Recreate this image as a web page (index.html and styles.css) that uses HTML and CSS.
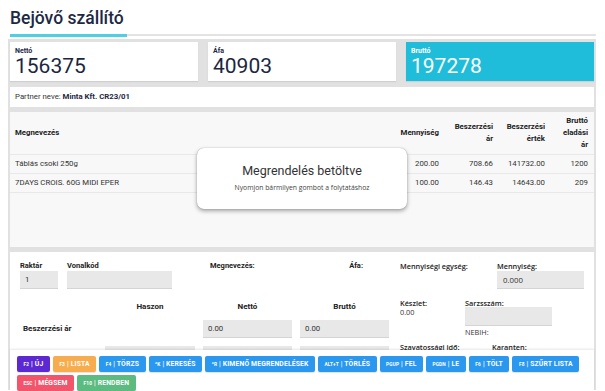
FILE: index.html
```html
<!DOCTYPE html>
<html lang="hu">
<head>
<meta charset="utf-8">
<title>Bejövő szállító</title>
<link rel="stylesheet" href="styles.css">
</head>
<body>
<div class="page">
  <header class="head">
    <h1 class="title">Bejövő szállító</h1>
    <div class="tabline"><span class="tabline-active"></span></div>
  </header>

  <main class="shell">
    <section class="totals">
      <div class="total"><div class="total-label">Nettó</div><div class="total-value">156375</div></div>
      <div class="total"><div class="total-label">Áfa</div><div class="total-value">40903</div></div>
      <div class="total total-accent"><div class="total-label">Bruttó</div><div class="total-value">197278</div></div>
    </section>

    <section class="partner">Partner neve: <b>Minta Kft. CR23/01</b></section>

    <section class="items">
      <table class="items-table">
        <colgroup>
          <col><col class="w-qty"><col class="w-price"><col class="w-value"><col class="w-gross">
        </colgroup>
        <thead>
          <tr>
            <th class="c-name">Megnevezés</th>
            <th>Mennyiség</th>
            <th>Beszerzési<br>ár</th>
            <th>Beszerzési<br>érték</th>
            <th>Bruttó<br>eladási<br>ár</th>
          </tr>
        </thead>
        <tbody>
          <tr><td class="c-name">Táblás csoki 250g</td><td>200.00</td><td>708.66</td><td>141732.00</td><td>1200</td></tr>
          <tr><td class="c-name">7DAYS CROIS. 60G MIDI EPER</td><td>100.00</td><td>146.43</td><td>14643.00</td><td>209</td></tr>
        </tbody>
      </table>
    </section>

    <section class="form">
      <div class="row-top">
        <div class="field f-raktar"><div class="lbl">Raktár</div><div class="inp">1</div></div>
        <div class="field f-vonal"><div class="lbl">Vonalkód</div><div class="inp"></div></div>
        <div class="field f-megn"><div class="lbl">Megnevezés:</div></div>
        <div class="field f-afa"><div class="lbl">Áfa:</div></div>
        <div class="field f-me"><div class="lbl lbl-os">Mennyiségi egység:</div></div>
        <div class="field f-menny"><div class="lbl lbl-os">Mennyiség:</div><div class="inp inp-os">0.000</div></div>
      </div>

      <div class="row-bottom">
        <div class="prices">
          <div></div>
          <div class="ph">Haszon</div>
          <div class="ph">Nettó</div>
          <div class="ph">Bruttó</div>

          <div class="pl">Beszerzési ár</div>
          <div></div>
          <div class="inp">0.00</div>
          <div class="inp">0.00</div>

          <div class="pl">Eladási ár</div>
          <div class="inp">0.00</div>
          <div class="inp">0.00</div>
          <div class="inp">0.00</div>
        </div>

        <div class="stock">
          <div class="stock-row">
            <div class="s-keszlet"><div class="slbl">Készlet:</div><div class="sval">0.00</div></div>
            <div class="s-sarzs"><div class="slbl">Sarzsszám:</div><div class="inp s-inp"></div><div class="sval s-nebih">NEBIH:</div></div>
          </div>
          <div class="stock-row stock-row2">
            <div class="s-wide"><div class="slbl">Szavatossági idő:</div></div>
            <div class="s-wide"><div class="slbl">Karanten:</div></div>
          </div>
        </div>
      </div>
    </section>
  </main>

  <footer class="actions">
    <div class="btn-row">
      <button class="btn btn-purple"><span class="key">F2</span>| ÚJ</button>
      <button class="btn btn-orange"><span class="key">F3</span>| LISTA</button>
      <button class="btn btn-blue"><span class="key">F4</span>| TÖRZS</button>
      <button class="btn btn-blue"><span class="key">^K</span>| KERESÉS</button>
      <button class="btn btn-blue"><span class="key">^R</span>| KIMENŐ MEGRENDELÉSEK</button>
      <button class="btn btn-blue"><span class="key">ALT+T</span>| TÖRLÉS</button>
      <button class="btn btn-blue"><span class="key">PGUP</span>| FEL</button>
      <button class="btn btn-blue"><span class="key">PGDN</span>| LE</button>
      <button class="btn btn-blue"><span class="key">F6</span>| TÖLT</button>
      <button class="btn btn-blue"><span class="key">F8</span>| SZŰRT LISTA</button>
    </div>
    <div class="btn-row">
      <button class="btn btn-red"><span class="key">ESC</span>| MÉGSEM</button>
      <button class="btn btn-green"><span class="key">F10</span>| RENDBEN</button>
    </div>
  </footer>

  <div class="modal">
    <div class="modal-title">Megrendelés betöltve</div>
    <div class="modal-text">Nyomjon bármilyen gombot a folytatáshoz</div>
  </div>
</div>
</body>
</html>
```
FILE: styles.css
```css
* { box-sizing: border-box; }
html, body { margin: 0; padding: 0; }
body {
  font-family: Roboto, "Noto Sans", sans-serif;
  color: #333;
  background: #fff;
}
.page {
  position: relative;
  width: 605px;
  height: 391px;
  overflow: hidden;
}

/* header */
.head { padding: 8px 9px 0 10px; }
.title {
  margin: 0;
  font-size: 17.5px;
  line-height: 20px;
  font-weight: 500;
  color: #1d2944;
}
.tabline {
  margin-top: 7px;
  height: 2px;
  background: #e3e3e3;
}
.tabline-active {
  display: block;
  width: 117px;
  height: 3px;
  margin-top: -1px;
  background: #4fcfe4;
}

/* gray shell */
.shell {
  margin: 3px 9px 0 8px;
  height: 351px;
  background: #e1e1e1;
  padding: 3px 2px 0;
}

.totals {
  display: grid;
  grid-template-columns: repeat(3, 1fr);
  gap: 10px;
}
.total {
  height: 39px;
  background: #fff;
  padding: 5px 5px 0;
  box-shadow: 0 1px 1px rgba(0,0,0,.08);
}
.total-label {
  font-size: 7px;
  line-height: 8px;
  font-weight: 700;
  color: #1d2944;
}
.total-value {
  font-size: 21px;
  line-height: 22px;
  color: #1b2640;
}
.total-accent { background: #1fbdd9; }
.total-accent .total-label,
.total-accent .total-value { color: #fff; }

.partner {
  margin-top: 6px;
  height: 20px;
  background: #fff;
  padding: 0 5px;
  font-size: 7.8px;
  line-height: 20px;
  color: #333;
}
.partner b { color: #1d2944; font-weight: 700; }

/* items table */
.items {
  margin-top: 5px;
  height: 135px;
  background: #f8f8f8;
}
.items-table {
  width: 100%;
  border-collapse: collapse;
  table-layout: fixed;
  font-size: 7.8px;
}
.w-qty { width: 55px; }
.w-price { width: 54px; }
.w-value { width: 52px; }
.w-gross { width: 43px; }
.items-table th {
  height: 42px;
  padding: 0 6px;
  text-align: right;
  vertical-align: middle;
  font-weight: 700;
  line-height: 12px;
  color: #222;
}
.items-table td {
  height: 19px;
  padding: 0 6px;
  text-align: right;
  border-top: 1px solid #e8e8e8;
  color: #333;
}
.items-table tbody tr:last-child td { border-bottom: 1px solid #e8e8e8; }
.items-table .c-name { text-align: left; padding-left: 5px; }

/* form */
.form {
  margin-top: 5px;
  height: 200px;
  background: #fff;
  padding: 9px 10px 0;
}
.row-top { display: flex; align-items: flex-start; }
.lbl {
  font-size: 7.5px;
  line-height: 10px;
  font-weight: 700;
  color: #222;
}
.lbl-os { font-family: "Open Sans", sans-serif; font-weight: 600; font-size: 7.3px; }
.inp {
  height: 18px;
  background: #e8e8e8;
  border-bottom: 1px solid #d4d4d4;
  padding: 0 5px;
  font-size: 7.8px;
  line-height: 18px;
  color: #333;
}
.inp-os { font-family: "Open Sans", sans-serif; padding-left: 6px; }
.f-raktar { width: 38px; margin-right: 9px; }
.f-vonal { width: 105px; margin-right: 38px; }
.f-megn { width: 130px; }
.f-afa { width: 23px; margin-right: 37px; text-align: right; }
.f-me { width: 97px; }
.f-menny { width: 87px; }

.row-bottom { display: flex; align-items: flex-start; }
.prices {
  width: 369px;
  padding-top: 13px;
  display: grid;
  grid-template-columns: 77px 90px 89px 89px;
  grid-template-rows: 10px 18px 18px;
  column-gap: 8px;
  row-gap: 8px;
}
.ph {
  text-align: center;
  font-size: 8px;
  line-height: 10px;
  font-weight: 700;
  color: #222;
}
.pl {
  padding-left: 3px;
  font-size: 8px;
  line-height: 18px;
  font-weight: 700;
  color: #222;
}

.stock {
  margin-left: 11px;
  width: 184px;
  padding-top: 10px;
  font-family: "Open Sans", sans-serif;
}
.stock-row { display: flex; align-items: flex-start; }
.stock-row2 { margin-top: 6px; }
.s-keszlet { width: 65px; }
.s-sarzs { width: 87px; }
.s-wide { width: 97px; }
.slbl {
  font-size: 7.3px;
  line-height: 9px;
  font-weight: 600;
  color: #222;
}
.sval {
  font-size: 7.3px;
  line-height: 9px;
  color: #333;
}
.s-inp { height: 19px; margin-top: -1px; }
.s-nebih { margin-top: 2px; }

/* footer actions */
.actions {
  position: absolute;
  left: 10px;
  top: 350px;
  width: 584px;
  height: 41px;
  background: #fff;
  padding: 6px 7px 0;
  box-shadow: 0 -1px 2px rgba(0,0,0,.10);
}
.btn-row { display: flex; gap: 3px; }
.btn-row + .btn-row { margin-top: 3px; }
.btn {
  height: 16px;
  padding: 0 6.5px;
  border: 0;
  border-radius: 2px;
  color: #fff;
  font-family: Roboto, sans-serif;
  font-size: 6.8px;
  font-weight: 700;
  letter-spacing: .15px;
  display: inline-flex;
  align-items: center;
  white-space: nowrap;
  box-shadow: 0 1px 1px rgba(0,0,0,.12);
}
.key { font-size: 4.8px; margin-right: 2px; letter-spacing: .1px; }
.btn-purple { background: #5b28d2; }
.btn-orange { background: #f7ad4d; }
.btn-blue { background: #2a98ef; }
.btn-red { background: #f1546b; }
.btn-green { background: #5cbb80; }

/* modal */
.modal {
  position: absolute;
  left: 197px;
  top: 148px;
  width: 210px;
  height: 61px;
  background: #fff;
  border-radius: 7px;
  box-shadow: 0 2px 4px rgba(0,0,0,.35), 0 0 1px rgba(0,0,0,.35);
  text-align: center;
  padding-top: 15px;
}
.modal-title {
  font-size: 12.5px;
  line-height: 16px;
  color: #333;
}
.modal-text {
  margin-top: 4px;
  font-family: "Open Sans", sans-serif;
  font-size: 6.8px;
  line-height: 10px;
  color: #444;
}
```
